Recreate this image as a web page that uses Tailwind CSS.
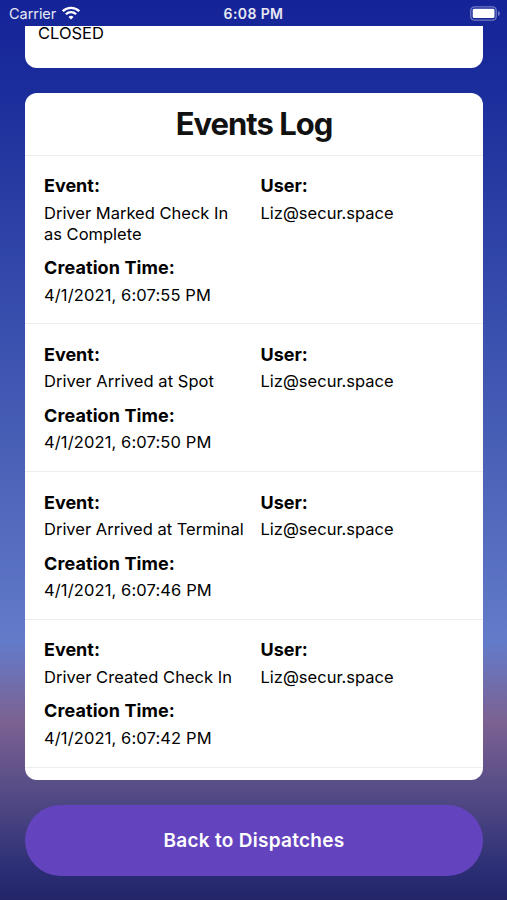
<!DOCTYPE html>
<html lang="en">
<head>
  <meta charset="UTF-8" />
  <meta name="viewport" content="width=device-width, initial-scale=1.0" />
  <title>Events Log</title>
  <script src="https://cdn.jsdelivr.net/npm/@tailwindcss/browser@4"></script>
</head>
<body class="font-['Inter',sans-serif] text-black">
  <div class="h-[900px] w-full flex flex-col overflow-hidden bg-[linear-gradient(180deg,#152398_0px,#1b2d9b_90px,#3a50ae_330px,#4d64b9_480px,#637bc9_642px,#7c6192_722px,#594e87_785px,#2b2e75_870px,#232568_900px)]">

    <!-- Status bar -->
    <header class="h-[26px] shrink-0 grid grid-cols-3 items-center pl-[9px] pr-[6px] text-white/90">
      <div class="flex items-center gap-[6px] text-[14.5px]">
        <span class="mt-[2px] tracking-[-0.05px]">Carrier</span>
        <svg class="w-[18px] h-[14px]" viewBox="0 0 18 14" fill="none" stroke="white" stroke-width="2.3">
          <path d="M0.8 5.2a11.6 11.6 0 0 1 16.4 0" />
          <path d="M3.9 8.3a7.2 7.2 0 0 1 10.2 0" />
          <path d="M9 13.5l-2.5-2.6a3.6 3.6 0 0 1 5 0z" fill="white" stroke="none" />
        </svg>
      </div>
      <div class="mr-[3px] text-center text-[14px] font-semibold tracking-[0.4px] whitespace-nowrap">6:08 PM</div>
      <svg class="justify-self-end w-[31px] h-[15px]" viewBox="0 0 31 15">
        <rect x="0.8" y="0.8" width="25.4" height="13.4" rx="3.6" fill="none" stroke="white" stroke-opacity="0.4" stroke-width="1.3" />
        <rect x="2.7" y="2.7" width="21.8" height="9.4" rx="1.4" fill="white" />
        <path d="M28 5v5c2.6-0.8 2.6-4.2 0-5z" fill="white" fill-opacity="0.4" />
      </svg>
    </header>

    <main class="flex flex-col px-[25px] pr-[24px]">
      <!-- Previous card, scrolled under the status bar -->
      <section class="h-[42px] bg-white rounded-b-xl px-[13px] text-[16.5px] leading-[15px]">CLOSED</section>

      <!-- Events log -->
      <section class="mt-[25px] h-[687px] bg-white rounded-xl overflow-hidden">
        <h1 class="h-[63px] border-b border-[#ededed] text-center text-[31px] leading-[62px] font-bold tracking-[-1px] text-[#111]">Events Log</h1>

        <article class="grid grid-cols-[216.5px_1fr] px-[19px] pt-[19px] h-[168px] border-b border-[#ededed] text-[16.5px] leading-[21px]">
          <div>
            <h2 class="text-[18px] leading-[22px] font-bold">Event:</h2>
            <p class="mt-[6px]">Driver Marked Check In<br>as Complete</p>
            <h2 class="mt-[12px] text-[18px] leading-[22px] font-bold tracking-[0.1px]">Creation Time:</h2>
            <p class="mt-[6px] tracking-[0.12px]">4/1/2021, 6:07:55 PM</p>
          </div>
          <div>
            <h2 class="text-[18px] leading-[22px] font-bold">User:</h2>
            <p class="mt-[6px]">Liz@secur.space</p>
          </div>
        </article>

        <article class="grid grid-cols-[216.5px_1fr] px-[19px] pt-[20px] h-[148px] border-b border-[#ededed] text-[16.5px] leading-[21px]">
          <div>
            <h2 class="text-[18px] leading-[22px] font-bold">Event:</h2>
            <p class="mt-[5px] tracking-[0.06px]">Driver Arrived at Spot</p>
            <h2 class="mt-[13px] text-[18px] leading-[22px] font-bold tracking-[0.1px]">Creation Time:</h2>
            <p class="mt-[5px] tracking-[0.12px]">4/1/2021, 6:07:50 PM</p>
          </div>
          <div>
            <h2 class="text-[18px] leading-[22px] font-bold">User:</h2>
            <p class="mt-[5px]">Liz@secur.space</p>
          </div>
        </article>

        <article class="grid grid-cols-[216.5px_1fr] px-[19px] pt-[20px] h-[148px] border-b border-[#ededed] text-[16.5px] leading-[21px]">
          <div>
            <h2 class="text-[18px] leading-[22px] font-bold">Event:</h2>
            <p class="mt-[5px] whitespace-nowrap">Driver Arrived at Terminal</p>
            <h2 class="mt-[13px] text-[18px] leading-[22px] font-bold tracking-[0.1px]">Creation Time:</h2>
            <p class="mt-[5px] tracking-[0.12px]">4/1/2021, 6:07:46 PM</p>
          </div>
          <div>
            <h2 class="text-[18px] leading-[22px] font-bold">User:</h2>
            <p class="mt-[5px]">Liz@secur.space</p>
          </div>
        </article>

        <article class="grid grid-cols-[216.5px_1fr] px-[19px] pt-[19px] h-[148px] border-b border-[#ededed] text-[16.5px] leading-[21px]">
          <div>
            <h2 class="text-[18px] leading-[22px] font-bold">Event:</h2>
            <p class="mt-[6px] tracking-[0.04px]">Driver Created Check In</p>
            <h2 class="mt-[12px] text-[18px] leading-[22px] font-bold tracking-[0.1px]">Creation Time:</h2>
            <p class="mt-[6px] tracking-[0.12px]">4/1/2021, 6:07:42 PM</p>
          </div>
          <div>
            <h2 class="text-[18px] leading-[22px] font-bold">User:</h2>
            <p class="mt-[6px]">Liz@secur.space</p>
          </div>
        </article>
      </section>

      <button class="mt-[25px] h-[71px] pt-[2px] rounded-full bg-[#6344be] text-white text-[19px] font-semibold tracking-[0.28px]">Back to Dispatches</button>
    </main>
  </div>
</body>
</html>
